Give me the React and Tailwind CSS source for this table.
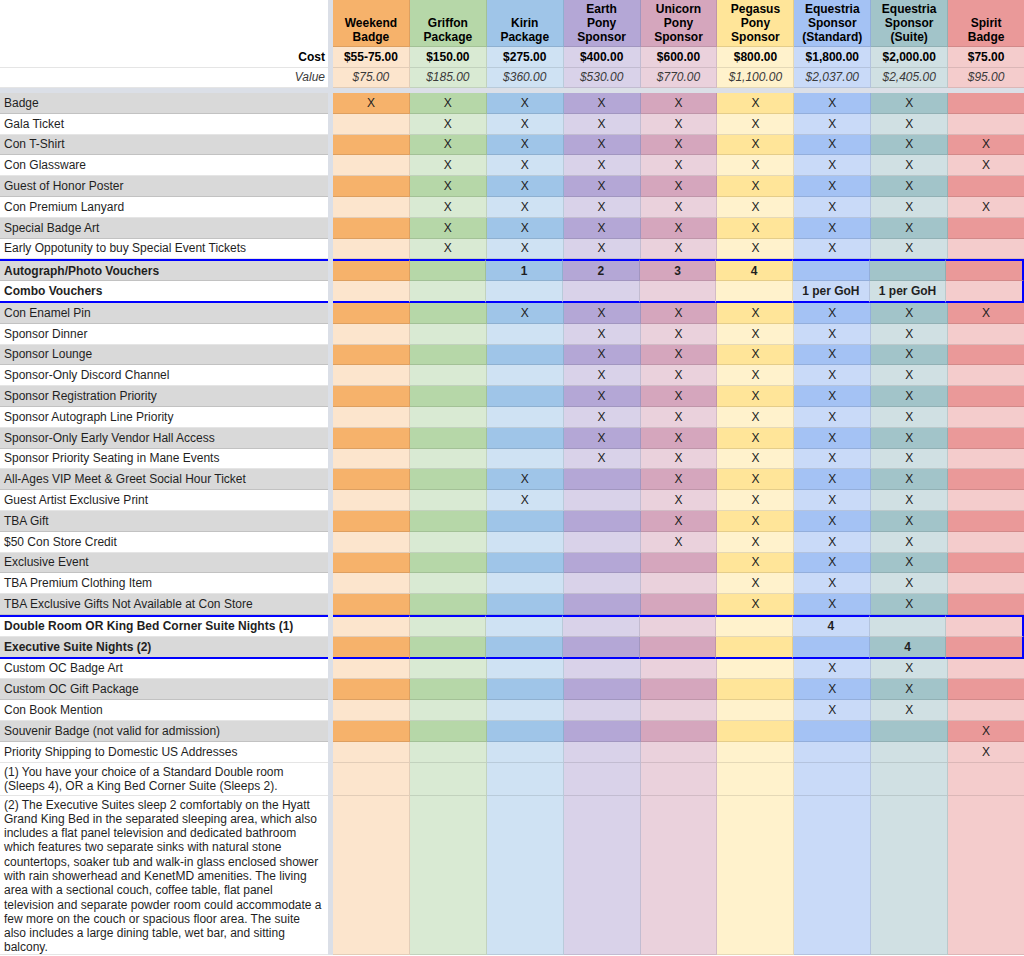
import React from "react";

const COLS = [
  { dark: "bg-[#f6b26b]", light: "bg-[#fce5cd]" },
  { dark: "bg-[#b6d7a8]", light: "bg-[#d9ead3]" },
  { dark: "bg-[#9fc5e8]", light: "bg-[#cfe2f3]" },
  { dark: "bg-[#b4a7d6]", light: "bg-[#d9d2e9]" },
  { dark: "bg-[#d5a6bd]", light: "bg-[#ead1dc]" },
  { dark: "bg-[#ffe599]", light: "bg-[#fff2cc]" },
  { dark: "bg-[#a4c2f4]", light: "bg-[#c9daf8]" },
  { dark: "bg-[#a2c4c9]", light: "bg-[#d0e0e3]" },
  { dark: "bg-[#ea9999]", light: "bg-[#f4cccc]" },
];

const HEADERS = [
  ["Weekend", "Badge"],
  ["Griffon", "Package"],
  ["Kirin", "Package"],
  ["Earth", "Pony", "Sponsor"],
  ["Unicorn", "Pony", "Sponsor"],
  ["Pegasus", "Pony", "Sponsor"],
  ["Equestria", "Sponsor", "(Standard)"],
  ["Equestria", "Sponsor", "(Suite)"],
  ["Spirit", "Badge"],
];

const COSTS = ["$55-75.00", "$150.00", "$275.00", "$400.00", "$600.00", "$800.00", "$1,800.00", "$2,000.00", "$75.00"];
const VALUES = ["$75.00", "$185.00", "$360.00", "$530.00", "$770.00", "$1,100.00", "$2,037.00", "$2,405.00", "$95.00"];

const X = "X";
const _ = "";

const ROWS = [
  { label: "Badge", cells: [X, X, X, X, X, X, X, X, _] },
  { label: "Gala Ticket", cells: [_, X, X, X, X, X, X, X, _] },
  { label: "Con T-Shirt", cells: [_, X, X, X, X, X, X, X, X] },
  { label: "Con Glassware", cells: [_, X, X, X, X, X, X, X, X] },
  { label: "Guest of Honor Poster", cells: [_, X, X, X, X, X, X, X, _] },
  { label: "Con Premium Lanyard", cells: [_, X, X, X, X, X, X, X, X] },
  { label: "Special Badge Art", cells: [_, X, X, X, X, X, X, X, _] },
  { label: "Early Oppotunity to buy Special Event Tickets", cells: [_, X, X, X, X, X, X, X, _] },
  { label: "Autograph/Photo Vouchers", bold: true, blue: "top", cells: [_, _, "1", "2", "3", "4", _, _, _] },
  { label: "Combo Vouchers", bold: true, blue: "bottom", cells: [_, _, _, _, _, _, "1 per GoH", "1 per GoH", _] },
  { label: "Con Enamel Pin", cells: [_, _, X, X, X, X, X, X, X] },
  { label: "Sponsor Dinner", cells: [_, _, _, X, X, X, X, X, _] },
  { label: "Sponsor Lounge", cells: [_, _, _, X, X, X, X, X, _] },
  { label: "Sponsor-Only Discord Channel", cells: [_, _, _, X, X, X, X, X, _] },
  { label: "Sponsor Registration Priority", cells: [_, _, _, X, X, X, X, X, _] },
  { label: "Sponsor Autograph Line Priority", cells: [_, _, _, X, X, X, X, X, _] },
  { label: "Sponsor-Only Early Vendor Hall Access", cells: [_, _, _, X, X, X, X, X, _] },
  { label: "Sponsor Priority Seating in Mane Events", cells: [_, _, _, X, X, X, X, X, _] },
  { label: "All-Ages VIP Meet & Greet Social Hour Ticket", cells: [_, _, X, _, X, X, X, X, _] },
  { label: "Guest Artist Exclusive Print", cells: [_, _, X, _, X, X, X, X, _] },
  { label: "TBA Gift", cells: [_, _, _, _, X, X, X, X, _] },
  { label: "$50 Con Store Credit", cells: [_, _, _, _, X, X, X, X, _] },
  { label: "Exclusive Event", cells: [_, _, _, _, _, X, X, X, _] },
  { label: "TBA Premium Clothing Item", cells: [_, _, _, _, _, X, X, X, _] },
  { label: "TBA Exclusive Gifts Not Available at Con Store", cells: [_, _, _, _, _, X, X, X, _] },
  { label: "Double Room OR King Bed Corner Suite Nights (1)", bold: true, blue: "top", cells: [_, _, _, _, _, _, "4", _, _] },
  { label: "Executive Suite Nights (2)", bold: true, blue: "bottom", cells: [_, _, _, _, _, _, _, "4", _] },
  { label: "Custom OC Badge Art", cells: [_, _, _, _, _, _, X, X, _] },
  { label: "Custom OC Gift Package", cells: [_, _, _, _, _, _, X, X, _] },
  { label: "Con Book Mention", cells: [_, _, _, _, _, _, X, X, _] },
  { label: "Souvenir Badge (not valid for admission)", cells: [_, _, _, _, _, _, _, _, X] },
  { label: "Priority Shipping to Domestic US Addresses", cells: [_, _, _, _, _, _, _, _, X] },
];

const NOTE1 = [
  "(1) You have your choice of a Standard Double room",
  "(Sleeps 4), OR a King Bed Corner Suite (Sleeps 2).",
];

const NOTE2 = [
  "(2) The Executive Suites sleep 2 comfortably on the Hyatt",
  "Grand King Bed in the separated sleeping area, which also",
  "includes a flat panel television and dedicated bathroom",
  "which features two separate sinks with natural stone",
  "countertops, soaker tub and walk-in glass enclosed shower",
  "with rain showerhead and KenetMD amenities. The living",
  "area with a sectional couch, coffee table, flat panel",
  "television and separate powder room could accommodate a",
  "few more on the couch or spacious floor area. The suite",
  "also includes a large dining table, wet bar, and sitting",
  "balcony.",
];

function Freeze() {
  return <div className="w-[5px] shrink-0 bg-[#dbdfe7]" />;
}

function DataRow({ row, dark }) {
  const blueTop = row.blue === "top";
  const blueBottom = row.blue === "bottom";
  const heightCls = row.blue ? "h-[21.8px]" : "h-[20.8px]";
  const edge = blueTop
    ? "border-t-2 border-t-[#0000ff] border-b border-b-black/10"
    : blueBottom
    ? "border-b-2 border-b-[#0000ff]"
    : "border-b border-b-black/10";
  return (
    <div className={`flex ${heightCls}`}>
      <div
        className={`w-[328px] shrink-0 flex items-center px-[4px] whitespace-nowrap ${edge} ${
          dark ? "bg-[#d9d9d9]" : "bg-white"
        } ${row.bold ? "font-bold" : ""}`}
      >
        {row.label}
      </div>
      <Freeze />
      {row.cells.map((c, i) => (
        <div
          key={i}
          className={`flex-1 basis-0 flex items-center justify-center whitespace-nowrap ${edge} ${
            dark ? COLS[i].dark : COLS[i].light
          } ${i < 8 ? "border-r border-r-black/10" : row.blue ? "border-r-2 border-r-[#0000ff]" : ""} ${
            row.bold ? "font-bold" : "text-[#222]"
          }`}
        >
          {c}
        </div>
      ))}
    </div>
  );
}

function NoteRow({ lines, heightCls }) {
  return (
    <div className={`flex ${heightCls}`}>
      <div className="w-[328px] shrink-0 bg-white px-[4px] pt-[2px] leading-[14.3px] border-b border-b-black/10 whitespace-nowrap">
        {lines.map((l, i) => (
          <div key={i}>{l}</div>
        ))}
      </div>
      <Freeze />
      {COLS.map((c, i) => (
        <div
          key={i}
          className={`flex-1 basis-0 ${c.light} border-b border-b-black/10 ${i < 8 ? "border-r border-r-black/10" : ""}`}
        />
      ))}
    </div>
  );
}

export default function App() {
  return (
    <div className="w-[1024px] bg-white text-[12px] leading-[14px] text-[#1f1f1f] font-['Liberation_Sans',Arial,sans-serif]">
      {/* Header */}
      <div className="flex h-[47px]">
        <div className="w-[328px] shrink-0 bg-white" />
        <Freeze />
        {HEADERS.map((lines, i) => (
          <div
            key={i}
            className={`flex-1 basis-0 flex flex-col items-center justify-end pb-[2px] font-bold text-black border-b border-b-black/10 ${
              COLS[i].dark
            } ${i < 8 ? "border-r border-r-black/10" : ""}`}
          >
            {lines.map((l, j) => (
              <div key={j} className="leading-[14px] whitespace-nowrap">
                {l}
              </div>
            ))}
          </div>
        ))}
      </div>
      {/* Cost */}
      <div className="flex h-[20.5px]">
        <div className="w-[328px] shrink-0 bg-white flex items-center justify-end pr-[3px] font-bold text-black border-b border-b-black/10">
          Cost
        </div>
        <Freeze />
        {COSTS.map((c, i) => (
          <div
            key={i}
            className={`flex-1 basis-0 flex items-center justify-center font-bold text-black whitespace-nowrap border-b border-b-black/10 ${
              COLS[i].light
            } ${i < 8 ? "border-r border-r-black/10" : ""}`}
          >
            {c}
          </div>
        ))}
      </div>
      {/* Value */}
      <div className="flex h-[20.5px]">
        <div className="w-[328px] shrink-0 bg-white flex items-center justify-end pr-[3px] italic text-[#3a3a3a] border-b border-b-black/10">
          Value
        </div>
        <Freeze />
        {VALUES.map((c, i) => (
          <div
            key={i}
            className={`flex-1 basis-0 flex items-center justify-center italic text-[#3a3a3a] whitespace-nowrap border-b border-b-black/10 ${
              COLS[i].light
            } ${i < 8 ? "border-r border-r-black/10" : ""}`}
          >
            {c}
          </div>
        ))}
      </div>
      {/* Horizontal freeze */}
      <div className="h-[5px] bg-[#dbdfe7]" />
      {ROWS.map((row, idx) => (
        <DataRow key={idx} row={row} dark={idx % 2 === 0} />
      ))}
      <NoteRow lines={NOTE1} heightCls="h-[33px]" />
      <NoteRow lines={NOTE2} heightCls="h-[159px]" />
    </div>
  );
}
